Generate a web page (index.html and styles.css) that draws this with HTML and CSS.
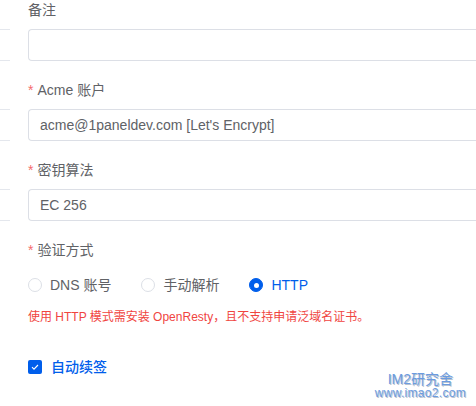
FILE: index.html
```html
<!DOCTYPE html>
<html lang="zh-CN">
<head>
<meta charset="utf-8">
<link rel="stylesheet" href="styles.css">
</head>
<body>
<form class="form">
  <div class="item">
    <div class="label">备注</div>
    <div class="row">
      <div class="stub"></div>
      <div class="input"></div>
    </div>
  </div>
  <div class="item">
    <div class="label"><span class="req">*</span>Acme 账户</div>
    <div class="row">
      <div class="stub"></div>
      <div class="input">acme@1paneldev.com [Let's Encrypt]</div>
    </div>
  </div>
  <div class="item">
    <div class="label"><span class="req">*</span>密钥算法</div>
    <div class="row">
      <div class="stub"></div>
      <div class="input">EC 256</div>
    </div>
  </div>
  <div class="item">
    <div class="label"><span class="req">*</span>验证方式</div>
    <div class="content">
      <div class="radios">
        <label class="radio"><span class="circle"></span><span class="rtext">DNS 账号</span></label>
        <label class="radio"><span class="circle"></span><span class="rtext">手动解析</span></label>
        <label class="radio checked"><span class="circle"></span><span class="rtext">HTTP</span></label>
      </div>
      <div class="help">使用 HTTP 模式需安装 OpenResty，且不支持申请泛域名证书。</div>
    </div>
  </div>
  <div class="item">
    <div class="content">
      <label class="checkbox">
        <span class="box"><svg width="14" height="14" viewBox="0 0 14 14"><polyline points="4,7.2 6,9.2 10,5" fill="none" stroke="#fff" stroke-width="1.1"/></svg></span>
        <span class="ctext">自动续签</span>
      </label>
    </div>
  </div>
</form>
<div class="watermark">
  <div class="wm1">IM2研究舍</div>
  <div class="wm2">www.imao2.com</div>
</div>
</body>
</html>
```

FILE: styles.css
```css
html, body {
  margin: 0;
  padding: 0;
  background: #fff;
  overflow: hidden;
}
body {
  font-family: "Liberation Sans", Arial, "Noto Sans CJK SC", sans-serif;
  font-size: 14px;
  color: #606266;
  width: 476px;
  height: 406px;
  position: relative;
}
.form {
  margin-top: -1px;
  padding-left: 28px;
}
.item {
  margin-bottom: 18px;
}
.label {
  line-height: 22px;
  padding-bottom: 8px;
  color: #606266;
}
.req {
  color: #f56c6c;
  margin-right: 4px;
}
.row {
  display: flex;
  gap: 18px;
  margin-left: -28px;
}
.stub {
  width: 10px;
  height: 30px;
  border-top: 1px solid #e4e7ed;
  border-bottom: 1px solid #e4e7ed;
  flex: none;
}
.input {
  flex: 1;
  height: 30px;
  line-height: 30px;
  border: 1px solid #dcdfe6;
  border-right: none;
  border-radius: 4px 0 0 4px;
  padding: 0 11px;
  color: #606266;
}
.content {
  line-height: 32px;
}
.radios {
  display: flex;
  height: 32px;
  align-items: center;
}
.radio {
  display: flex;
  align-items: center;
  margin-right: 30px;
  height: 32px;
}
.circle {
  width: 12px;
  height: 12px;
  border: 1px solid #dcdfe6;
  border-radius: 50%;
  box-sizing: content-box;
  position: relative;
}
.rtext {
  padding-left: 8px;
  color: #606266;
}
.radio.checked .circle {
  background: #005eeb;
  border-color: #005eeb;
}
.radio.checked .circle::after {
  content: "";
  position: absolute;
  left: 50%;
  top: 50%;
  width: 5px;
  height: 5px;
  margin: -2.5px 0 0 -2.5px;
  border-radius: 50%;
  background: #fff;
}
.radio.checked .rtext {
  color: #005eeb;
}
.help {
  font-size: 12px;
  color: #f0453f;
  line-height: 32px;
}
.checkbox {
  display: flex;
  align-items: center;
  height: 32px;
}
.box {
  width: 14px;
  height: 14px;
  border-radius: 2px;
  background: #005eeb;
  display: flex;
}
.ctext {
  padding-left: 9px;
  color: #005eeb;
  font-size: 14px;
  font-weight: 500;
}
.watermark {
  position: absolute;
  right: 10px;
  bottom: 7px;
  text-align: center;
  color: #6b9be0;
  text-shadow: 1px 1px 0 #b8c2d0, -1px 0 0 #fff;
}
.wm1 {
  font-size: 14px;
  line-height: 15px;
  font-family: "Liberation Sans", "Noto Sans CJK SC", sans-serif;
}
.wm2 {
  font-size: 12px;
  line-height: 12px;
  font-family: "Liberation Sans", sans-serif;
  letter-spacing: 0.3px;
}
```
